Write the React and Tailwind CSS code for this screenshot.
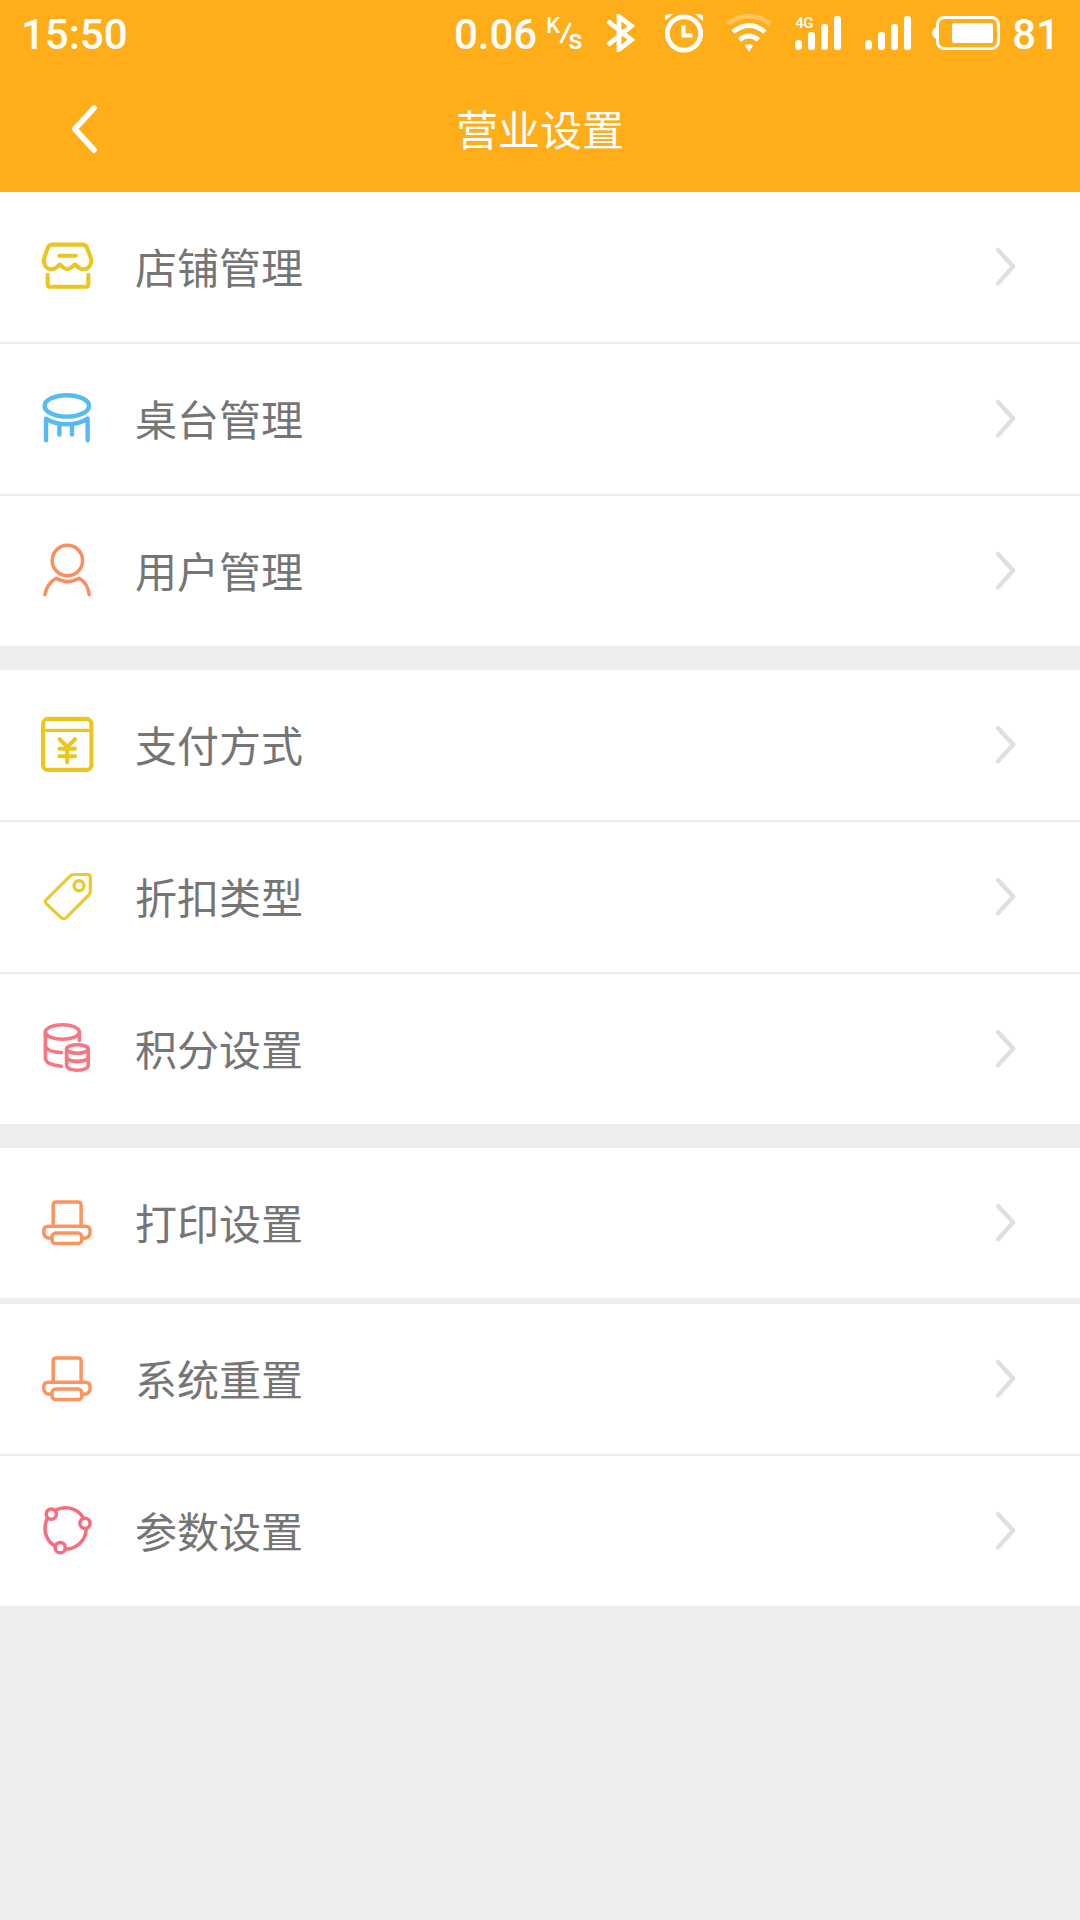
import clsx from "clsx";

const StoreIcon = () => (
  <g stroke="#ebc620" strokeWidth="4.1">
    <path d="M17.3 9.6H47.5Q50.6 9.6 51.8 12.3L56 23.2C57.6 29.5 53.2 34.3 48.5 34.3C44.6 34.3 42.6 31.2 40 29.6C37.4 31.2 35.4 34.3 32.3 34.3C29.2 34.3 27.4 31.2 24.9 29.6C22.4 31.2 20.4 34.3 16.6 34.3C11.6 34.3 7.6 29.5 9.2 23.2L13 12.3Q14.2 9.6 17.3 9.6Z" />
    <path d="M24.4 20.7H40.8" />
    <path d="M12.7 39.7V49.2Q12.7 51.8 15.3 51.8H50.8Q53.3 51.8 53.3 49.2V39.7" />
  </g>
);

const TableIcon = () => (
  <g stroke="#55bbf2" strokeWidth="4.4">
    <ellipse cx="31.8" cy="18.9" rx="22.2" ry="10.7" />
    <path d="M11 53.2V31.6C16.5 35.3 23.4 37.2 31.8 37.2C40.2 37.2 47.2 35.3 52.6 31.6V53.2" />
    <path d="M24.4 38V47.6M37 38V47.6" />
  </g>
);

const UserIcon = () => (
  <g stroke="#fb8e61" strokeWidth="3.5">
    <circle cx="32.4" cy="21.5" r="15.2" />
    <path d="M9.8 55.8C11.3 48.4 15.2 42.5 21.2 39.3C24.6 41.5 28.3 42.5 32.4 42.5C36.5 42.5 40.6 41.5 44.2 39.3C50 42.5 53.2 48.4 54.2 55.8" />
  </g>
);

const PayIcon = () => (
  <g stroke="#ebc620" strokeWidth="4.1">
    <rect x="8" y="5.9" width="48.4" height="51" rx="5" />
    <path d="M8 17.4H56.4" strokeWidth="3.4" />
    <path d="M24.6 26.2L32.2 33.9L40 26.2M24.4 35.7H40M24.4 43.3H40M32.2 34.5V49.2" />
  </g>
);

const TagIcon = () => (
  <g stroke="#ebcb2b" strokeWidth="3.2">
    <path d="M39 9.5H52.6Q55.3 9.5 55.3 12.2V26.4Q55.3 28.5 53.8 30L31.5 52.3Q28.6 55 25.8 52.4L11.2 38.6Q9.3 36.8 11.2 34.8L35 11.2Q36.7 9.5 39 9.5Z" />
    <circle cx="44" cy="20.7" r="5" strokeWidth="3.4" />
  </g>
);

const CoinsIcon = () => (
  <g stroke="#f97583" strokeWidth="3.6">
    <ellipse cx="27.4" cy="15" rx="17" ry="7.3" />
    <path d="M10.4 14.7V41.2C10.4 45.6 17.5 48.8 26.3 49.2" />
    <path d="M10.4 29.5C12.2 33.2 18.5 35.4 26.3 35.5" />
    <path d="M44.4 14.7V23.5" />
    <ellipse cx="42.4" cy="32" rx="10.8" ry="4.3" />
    <path d="M31.6 32V48.6C31.6 51.2 36.2 53.2 42.4 53.2C48.6 53.2 53.2 51.2 53.2 48.6V32" />
    <path d="M31.6 41.2C33.2 43.3 37.4 44.4 42.4 44.4C47.4 44.4 51.6 43.3 53.2 41.2" />
  </g>
);

const PrinterIcon = () => (
  <g stroke="#fd935f" strokeWidth="3.5">
    <path d="M18.2 34.8V14Q18.2 10.9 21.3 10.9H43Q46.1 10.9 46.1 14V34.8" />
    <path d="M17 47.2H15.2Q8.7 47.2 8.7 41V40Q8.7 35.3 13.5 35.3H50.4Q55.1 35.3 55.1 40V41Q55.1 47.2 48.6 47.2H46.8" />
    <rect x="17" y="42.1" width="29.8" height="10.5" rx="3.6" />
  </g>
);

const ParamsIcon = () => (
  <g stroke="#f76c7f" strokeWidth="3.5">
    <circle cx="30.6" cy="29.4" r="20.6" />
    <circle cx="16.3" cy="15.1" r="5.1" fill="#fff" />
    <circle cx="50" cy="24.4" r="5.1" fill="#fff" />
    <circle cx="25.2" cy="48.7" r="5.1" fill="#fff" />
  </g>
);

const groups = [
  {
    gap: "mb-6",
    items: [
      { label: "店铺管理", Icon: StoreIcon },
      { label: "桌台管理", Icon: TableIcon },
      { label: "用户管理", Icon: UserIcon },
    ],
  },
  {
    gap: "mb-6",
    items: [
      { label: "支付方式", Icon: PayIcon },
      { label: "折扣类型", Icon: TagIcon },
      { label: "积分设置", Icon: CoinsIcon },
    ],
  },
  {
    gap: "mb-1.5",
    items: [{ label: "打印设置", Icon: PrinterIcon }],
  },
  {
    gap: "mb-0",
    items: [
      { label: "系统重置", Icon: PrinterIcon },
      { label: "参数设置", Icon: ParamsIcon },
    ],
  },
];

const SignalBars = () => (
  <svg width="46" height="34" viewBox="0 0 46 34" fill="#fff">
    <rect x="0" y="24" width="7" height="10" rx="3.4" />
    <rect x="13" y="16" width="7" height="18" rx="3" />
    <rect x="26" y="8" width="7" height="26" rx="3" />
    <rect x="39" y="0" width="7" height="34" rx="3" />
  </svg>
);

const StatusBar = () => (
  <div className="flex h-[66px] items-center pl-[21px] pr-5 font-[Roboto,sans-serif] text-[42px] font-medium leading-none">
    <span className="mt-1">15:50</span>
    <div className="ml-auto flex items-center">
      <span className="mt-1">0.06</span>
      <div className="ml-[9px] flex h-[34px] w-9 items-start">
        <span className="text-[22px] leading-[19px]">K</span>
        <svg className="-ml-px mt-1.5 shrink-0" width="13" height="23" viewBox="0 0 13 23">
          <path d="M11.5 1L1.5 21" stroke="#fff" strokeWidth="2.8" />
        </svg>
        <span className="-ml-[4px] mt-[10px] text-[28px] leading-[27px]">s</span>
      </div>

      {/* bluetooth */}
      <svg className="ml-[24px]" width="30" height="38" viewBox="0 0 30 38">
        <path d="M1.7 7L25.3 26L13 35.4V2.6L25.3 12L1.7 31" fill="none" stroke="#fff" strokeWidth="4.8" />
      </svg>

      {/* alarm */}
      <svg className="ml-[28px]" width="40" height="40" viewBox="0 0 40 40" fill="none" stroke="#fff">
        <circle cx="20" cy="20.5" r="16.7" strokeWidth="4.8" />
        <path d="M19.5 12.5V22.5H28.5" strokeWidth="4" />
        <path d="M1 8V4Q1 1.2 4 1.2H9ZM39 8V4Q39 1.2 36 1.2H31Z" fill="#fff" stroke="none" />
      </svg>

      {/* wifi */}
      <svg className="ml-[22px]" width="46" height="38" viewBox="0 0 46 38" fill="none" stroke="#fff" strokeWidth="4.8">
        <path d="M1.8 9.8Q23 -5.5 44.2 9.8" opacity="0.3" />
        <path d="M7 18Q23 5 39 18" />
        <path d="M13.5 26Q23 18 32.5 26" />
        <path d="M18.8 31.5Q23 28.4 27.2 31.5L23 37.8Z" fill="#fff" stroke="none" />
      </svg>

      <div className="relative ml-[23px]">
        <SignalBars />
        <span className="absolute left-0 top-0 text-[15px] leading-[14px] tracking-[-0.5px]">4G</span>
      </div>
      <div className="ml-6">
        <SignalBars />
      </div>

      {/* battery */}
      <svg className="ml-[21px]" width="68" height="34" viewBox="0 0 68 34">
        <path d="M5 11Q0 13 0 17T5 23Z" fill="#fff" />
        <rect x="5.4" y="1.5" width="61" height="31" rx="7" fill="none" stroke="#fff" strokeWidth="3" />
        <rect x="20" y="7" width="41" height="20" rx="2" fill="#fff" />
      </svg>
      <span className="ml-3 mt-1">81</span>
    </div>
  </div>
);

const Row = ({ label, Icon, divided }) => (
  <li className={clsx("flex items-center bg-white pl-[35px] pr-[62px]", divided ? "h-[152px] border-t-2 border-[#ededed]" : "h-[150px]")}>
    <svg width="64" height="64" viewBox="0 0 64 64" fill="none" strokeLinecap="round" strokeLinejoin="round">
      <Icon />
    </svg>
    <span className="mb-0.5 ml-9 text-[42px] leading-[60px] text-[#757575]">{label}</span>
    <svg className="ml-auto" width="24" height="40" viewBox="0 0 24 40" fill="none">
      <path d="M4.2 3.2L19.2 19.6L4 36.2" stroke="#dfdfdf" strokeWidth="4.4" strokeLinecap="round" strokeLinejoin="round" />
    </svg>
  </li>
);

const App = () => {
  return (
    <div className="min-h-[1920px] w-[1080px] bg-[#ededed] font-['Noto_Sans_CJK_SC',sans-serif]">
      <header className="h-48 bg-[#ffad18] text-white">
        <StatusBar />
        <div className="grid h-[126px] grid-cols-3 items-center">
          <button type="button" className="ml-[66px] w-9">
            <svg width="36" height="50" viewBox="0 0 36 50" fill="none">
              <path d="M28 4L8.8 25L28 46" stroke="#fff" strokeWidth="5.6" strokeLinecap="round" strokeLinejoin="round" />
            </svg>
          </button>
          <h1 className="mb-0.5 text-center text-[42px] leading-[60px]">营业设置</h1>
        </div>
      </header>

      <main>
        {groups.map((group, i) => (
          <ul key={i} className={group.gap}>
            {group.items.map((item, j) => (
              <Row key={item.label} label={item.label} Icon={item.Icon} divided={j > 0} />
            ))}
          </ul>
        ))}
      </main>
    </div>
  );
};

export default App;
